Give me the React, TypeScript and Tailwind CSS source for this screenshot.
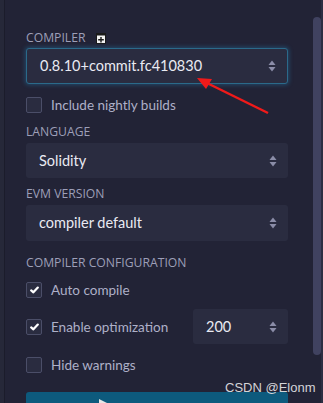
import React from 'react';

const Arrows: React.FC = () => (
  <svg width="8" height="12" viewBox="0 0 8 12" className="shrink-0">
    <path d="M4 0.5 L7.5 5 H0.5 Z" fill="#8b8da8" />
    <path d="M4 11.5 L7.5 7 H0.5 Z" fill="#8b8da8" />
  </svg>
);

const Select: React.FC<{ value: string; focus?: boolean; className?: string }> = ({ value, focus, className }) => (
  <div
    className={
      'flex items-center justify-between rounded-[3px] bg-[#2a2c40] pl-[13px] pr-[11px] text-[14.5px] leading-[16px] text-[#e9eaf2] ' +
      (focus ? 'border border-[#2b6a8a] shadow-[0_0_4px_1px_rgba(35,120,170,0.45)] pl-[12px] ' : '') +
      (className ?? '')
    }
  >
    <span>{value}</span>
    <Arrows />
  </div>
);

const Check: React.FC<{ checked?: boolean; label: string }> = ({ checked, label }) => (
  <div className="flex items-center gap-[9px] h-[16px]">
    <div className="w-[16px] h-[16px] rounded-[2px] border border-[#4b4e68] bg-[#2a2c40] flex items-center justify-center">
      {checked && (
        <svg width="9" height="8" viewBox="0 0 9 8">
          <path d="M1.2 4.4 L3.4 6.3 L7.8 1.6" stroke="#fff" strokeWidth="2.2" fill="none" strokeLinecap="round" strokeLinejoin="round" />
        </svg>
      )}
    </div>
    <span className="text-[13.5px] leading-[16px] text-[#aeb0c8]">{label}</span>
  </div>
);

const Label: React.FC<{ children: React.ReactNode }> = ({ children }) => (
  <div
    className="h-[14px] text-[12.2px] leading-[14px] text-[#9d9fb8] uppercase"
    style={{ fontFamily: '"Open Sans", Lato, sans-serif' }}
  >
    {children}
  </div>
);

export default function App() {
  return (
    <div
      className="relative w-[323px] h-[403px] overflow-hidden bg-[#222336] flex"
      style={{ fontFamily: 'Lato, "Open Sans", sans-serif' }}
    >
      <div className="w-[5px] bg-[#262839] border-r border-[#1b1c2b]" />
      <div className="flex-1 flex flex-col pl-[21px] pt-[31px]">
        <div className="w-[262px] flex flex-col">
          <div className="flex items-center gap-[10px] h-[14px]">
            <Label>Compiler</Label>
            <svg width="10" height="11" viewBox="0 0 10 11">
              <rect x="0.5" y="0.5" width="9" height="10" fill="#f2f2f2" stroke="#1a1a1a" />
              <rect x="0.5" y="0.5" width="9" height="2" fill="#1a1a1a" />
              <path d="M5 4 V9.5 M2.2 6.8 H7.8" stroke="#1a1a1a" strokeWidth="1.4" />
            </svg>
          </div>
          <Select value="0.8.10+commit.fc410830" focus className="mt-[3px] h-[36px]" />
          <div className="mt-[13px]">
            <Check label="Include nightly builds" />
          </div>
          <div className="mt-[12px]">
            <Label>Language</Label>
          </div>
          <Select value="Solidity" className="mt-[4px] h-[35px]" />
          <div className="mt-[9px]">
            <Label>EVM Version</Label>
          </div>
          <Select value="compiler default" className="mt-[4px] h-[36px]" />
          <div className="mt-[15px]">
            <Label>Compiler Configuration</Label>
          </div>
          <div className="mt-[12px]">
            <Check checked label="Auto compile" />
          </div>
          <div className="mt-[11px] flex items-center justify-between">
            <Check checked label="Enable optimization" />
            <Select value="200" className="w-[95px] h-[35px]" />
          </div>
          <div className="mt-[13px]">
            <Check label="Hide warnings" />
          </div>
          <div className="mt-[19px] h-[20px] bg-[#0d5a7d] rounded-t-[3px] relative">
            <svg className="absolute left-[72px] top-[6px]" width="12" height="12" viewBox="0 0 12 12">
              <path d="M1 1 L9 5 L1 9 Z" fill="#e6e6e6" />
            </svg>
          </div>
        </div>
      </div>
      <div className="absolute right-[2px] top-[17px] w-[8px] h-[338px] rounded-[4px] bg-[#404260]" />
      <div className="absolute right-0 top-0 w-[2px] h-full bg-[#2c2e42]" />
      <svg className="absolute left-0 top-0 pointer-events-none" width="323" height="403">
        <line x1="268" y1="113" x2="207" y2="83" stroke="#f01a1a" strokeWidth="2.5" />
        <path d="M197 78 L212 79 L206 89 Z" fill="#f01a1a" />
      </svg>
      <div
        className="absolute left-[225px] top-[380px] text-[13px] leading-[16px] text-[#d4d4d8]"
        style={{ fontFamily: '"Liberation Sans", Arial, sans-serif' }}
      >
        CSDN @Elonm
      </div>
    </div>
  );
}
